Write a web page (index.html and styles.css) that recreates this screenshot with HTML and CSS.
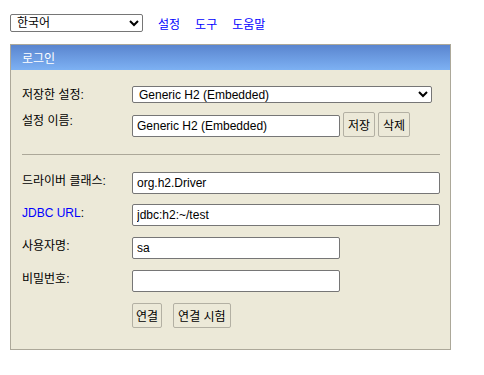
FILE: index.html
```html
<!DOCTYPE html>
<html lang="ko">
<head>
    <meta charset="UTF-8">
    <title>H2 Console</title>
    <link rel="stylesheet" href="styles.css">
</head>
<body>
    <div class="toolbar">
        <select class="lang">
            <option>한국어</option>
        </select>
        <a href="#">설정</a>
        <a href="#">도구</a>
        <a href="#">도움말</a>
    </div>

    <form class="login">
        <div class="login-title">로그인</div>
        <div class="login-body">
            <div class="field first">
                <label>저장한 설정:</label>
                <select class="saved">
                    <option>Generic H2 (Embedded)</option>
                </select>
            </div>
            <div class="field">
                <label>설정 이름:</label>
                <div class="inline">
                    <input type="text" class="short" value="Generic H2 (Embedded)">
                    <button type="button" class="small">저장</button>
                    <button type="button" class="small">삭제</button>
                </div>
            </div>

            <hr>

            <div class="field driver">
                <label>드라이버 클래스:</label>
                <input type="text" class="long" value="org.h2.Driver">
            </div>
            <div class="field">
                <label><a href="#">JDBC URL</a>:</label>
                <input type="text" class="long" value="jdbc:h2:~/test">
            </div>
            <div class="field">
                <label>사용자명:</label>
                <input type="text" class="short" value="sa">
            </div>
            <div class="field">
                <label>비밀번호:</label>
                <input type="password" class="short">
            </div>
            <div class="field">
                <span></span>
                <div class="actions">
                    <button type="button">연결</button>
                    <button type="button">연결 시험</button>
                </div>
            </div>
        </div>
    </form>
</body>
</html>
```

FILE: styles.css
```css
* {
    box-sizing: border-box;
}

body {
    margin: 0;
    padding: 14px 10px;
    background: #fff;
    color: #000;
    font-family: "Liberation Sans", Arial, "Noto Sans CJK KR", sans-serif;
    font-size: 12px;
}

a {
    color: #0000ff;
    text-decoration: none;
}

.toolbar {
    display: flex;
    align-items: center;
    gap: 15px;
    height: 18px;
}

.toolbar a {
    font-size: 12px;
}

.lang {
    width: 133px;
    height: 18px;
}

select,
input,
button {
    font-family: "Liberation Sans", Arial, "Noto Sans CJK KR", sans-serif;
    font-size: 12px;
    color: #000;
}

select {
    border: 1px solid #767676;
    border-radius: 2px;
    background: #fff;
    padding: 0 2px;
}

.login {
    width: 441px;
    height: 306px;
    margin-top: 12px;
    border: 1px solid #aca899;
    background: #ece9d8;
}

.login-title {
    height: 25px;
    padding: 4px 11px;
    color: #fff;
    font-size: 12px;
    background: linear-gradient(#5a85cf, #7db1f3);
}

.login-body {
    padding: 16px 10px 0 11px;
    display: flex;
    flex-direction: column;
    gap: 11px;
}

.field {
    display: grid;
    grid-template-columns: 110px auto;
    align-items: start;
}

.field label {
    line-height: 16px;
    padding-top: 1px;
}

.field.first {
    align-items: center;
    margin-bottom: -2px;
}

.field.first label {
    padding-top: 0;
}

.field.driver {
    margin-bottom: -1px;
}

.saved {
    width: 300px;
    height: 17px;
}

input {
    height: 22px;
    border: 1px solid #767676;
    border-radius: 2px;
    padding: 1px 4px;
    background: #fff;
}

.long {
    width: 308px;
}

.short {
    width: 208px;
}

.inline {
    display: flex;
    align-items: flex-end;
    gap: 3px;
}

button {
    background: #ece9d8;
    border: 1px solid #b3b0a3;
    border-radius: 2px;
    padding: 0 3px;
    height: 25px;
}

.small {
    width: 32px;
    padding: 0;
}

.actions {
    display: flex;
    gap: 11px;
}

.actions button + button {
    padding: 0 4px;
}

hr {
    margin: 6px 0 6px;
    border: none;
    border-top: 1px solid #aca899;
    height: 0;
    width: 418px;
}
```
